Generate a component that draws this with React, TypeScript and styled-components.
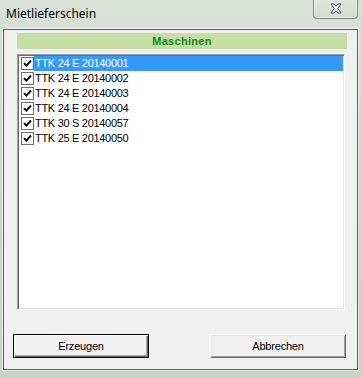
import React from "react";
import styled, { createGlobalStyle } from "styled-components";

const Global = createGlobalStyle`
  html, body { margin: 0; padding: 0; }
  body { width: 362px; height: 378px; overflow: hidden; }
`;

const Window = styled.div`
  width: 362px;
  height: 378px;
  box-sizing: border-box;
  display: flex;
  flex-direction: column;
  padding: 0 4px 8px 3px;
  background: linear-gradient(180deg, #d9e1d8 0%, #ced8cd 40%, #c9d3c8 100%);
  font-family: "Liberation Sans", Arial, sans-serif;
`;

const TitleBar = styled.div`
  height: 29px;
  display: flex;
  align-items: flex-start;
  justify-content: space-between;
  flex-shrink: 0;
`;

const Title = styled.div`
  font-family: "Noto Sans", "Open Sans", sans-serif;
  font-size: 12px;
  color: #000;
  margin: 6px 0 0 3px;
  line-height: 16px;
`;

const CloseButton = styled.div`
  width: 45px;
  height: 20px;
  margin-top: -1px;
  margin-right: 0px;
  box-sizing: border-box;
  border: 1px solid #7f887f;
  border-top: none;
  border-radius: 0 0 4px 4px;
  background: linear-gradient(180deg, #dfe6de 0%, #d3dbd2 100%);
  box-shadow: inset 0 0 0 1px rgba(255, 255, 255, 0.45);
  display: flex;
  align-items: center;
  justify-content: center;
`;

const Client = styled.div`
  flex: 1;
  display: flex;
  flex-direction: column;
  background: #f0f0f0;
  border: 1px solid #5b645c;
  box-shadow: 0 0 0 1px rgba(255, 255, 255, 0.55);
  padding: 3px 10px 11px 13px;
`;

const Header = styled.div`
  height: 16px;
  background: #c6dea6;
  color: #0d8a12;
  font-weight: bold;
  font-size: 11px;
  letter-spacing: 0.3px;
  line-height: 16px;
  text-align: center;
  flex-shrink: 0;
`;

const ListBox = styled.div`
  margin-top: 5px;
  margin-right: 2px;
  height: 256px;
  box-sizing: border-box;
  border: 1px solid;
  border-color: #a0a0a0 #ffffff #ffffff #a0a0a0;
  box-shadow: inset 1px 1px 0 #696969, inset -1px -1px 0 #e3e3e3;
  background: #fff;
  padding: 1px 1px 1px 3px;
  display: flex;
  flex-direction: column;
`;

const Row = styled.div`
  height: 15px;
  display: flex;
  align-items: center;
`;

const CheckBox = styled.div`
  width: 13px;
  height: 13px;
  box-sizing: border-box;
  border: 1px solid #707070;
  background: #fff;
  display: flex;
  align-items: center;
  justify-content: center;
  flex-shrink: 0;
`;

const Label = styled.div<{ $selected?: boolean }>`
  flex: 1;
  height: 15px;
  line-height: 15px;
  padding-left: 1px;
  font-size: 11px;
  letter-spacing: -0.3px;
  color: ${(p) => (p.$selected ? "#fff" : "#000")};
  background: ${(p) => (p.$selected ? "#3399ff" : "transparent")};
  white-space: nowrap;
`;

const ButtonRow = styled.div`
  margin-top: 24px;
  margin-left: -4px;
  margin-right: 1px;
  display: flex;
  justify-content: space-between;
`;

const Button = styled.div<{ $default?: boolean }>`
  width: 136px;
  height: 24px;
  box-sizing: border-box;
  background: #f0f0f0;
  font-size: 11px;
  letter-spacing: -0.2px;
  color: #000;
  display: flex;
  align-items: center;
  justify-content: center;
  border: 1px solid;
  border-color: ${(p) =>
    p.$default ? "#000" : "#ffffff #696969 #696969 #ffffff"};
  box-shadow: ${(p) =>
    p.$default
      ? "inset 1px 1px 0 #fff, inset -1px -1px 0 #696969, inset -2px -2px 0 #a0a0a0"
      : "inset 1px 1px 0 #e3e3e3, inset -1px -1px 0 #a0a0a0"};
`;

const items = [
  "TTK 24 E 20140001",
  "TTK 24 E 20140002",
  "TTK 24 E 20140003",
  "TTK 24 E 20140004",
  "TTK 30 S 20140057",
  "TTK 25 E 20140050",
];

const Check = () => (
  <svg width="9" height="9" viewBox="0 0 9 9">
    <path d="M1 4.2 L3.3 6.6 L8 1.5" fill="none" stroke="#000" strokeWidth="1.9" />
  </svg>
);

const CloseGlyph = () => (
  <svg width="14" height="11" viewBox="0 0 14 11">
    <path
      d="M2 1 L5 1 L7 3.3 L9 1 L12 1 L8.7 5.5 L12 10 L9 10 L7 7.7 L5 10 L2 10 L5.3 5.5 Z"
      fill="#fff"
      stroke="#4a4f55"
      strokeWidth="1"
      strokeLinejoin="round"
    />
  </svg>
);

export default function App() {
  return (
    <>
      <Global />
      <Window>
        <TitleBar>
          <Title>Mietlieferschein</Title>
          <CloseButton>
            <CloseGlyph />
          </CloseButton>
        </TitleBar>
        <Client>
          <Header>Maschinen</Header>
          <ListBox>
            {items.map((it, i) => (
              <Row key={it}>
                <CheckBox>
                  <Check />
                </CheckBox>
                <Label $selected={i === 0}>{it}</Label>
              </Row>
            ))}
          </ListBox>
          <ButtonRow>
            <Button $default>Erzeugen</Button>
            <Button>Abbrechen</Button>
          </ButtonRow>
        </Client>
      </Window>
    </>
  );
}
